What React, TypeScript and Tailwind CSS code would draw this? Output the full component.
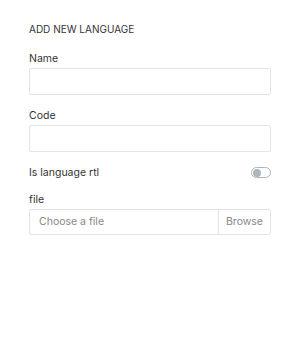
import { useState } from 'react'

export default function App() {
  const [rtl, setRtl] = useState(false)

  return (
    <div className="w-[300px] h-[338px] bg-white px-[29px] pt-[23px] text-[#333] font-['Inter','Liberation_Sans',sans-serif]">
      <h5 className="text-[10px] leading-[13px] uppercase text-[#333]">Add new language</h5>

      <div className="mt-[16px]">
        <label className="block text-[10.5px] leading-[13px]">Name</label>
        <input className="mt-[3px] block w-full h-[27px] border border-[#e3e3e3] rounded-[2px] outline-none px-2 text-[11px]" />
      </div>

      <div className="mt-[14px]">
        <label className="block text-[10.5px] leading-[13px]">Code</label>
        <input className="mt-[3px] block w-full h-[27px] border border-[#e3e3e3] rounded-[2px] outline-none px-2 text-[11px]" />
      </div>

      <div className="mt-[14px] flex items-center justify-between">
        <span className="text-[10.5px] leading-[13px]">Is language rtl</span>
        <button
          onClick={() => setRtl(!rtl)}
          className="w-[20px] h-[11px] rounded-full border border-[#adb5bd] bg-white flex items-center px-[1px]"
        >
          <span className="w-[8px] h-[8px] rounded-full bg-[#adb5bd]" />
        </button>
      </div>

      <div className="mt-[14px]">
        <label className="block text-[10.5px] leading-[13px]">file</label>
        <div className="mt-[3px] flex h-[26px] border border-[#e3e3e3] rounded-[2px] text-[10.5px] text-[#888]">
          <span className="flex-1 flex items-center pl-[9px]">Choose a file</span>
          <span className="flex items-center px-[7px] border-l border-[#e3e3e3]">Browse</span>
        </div>
      </div>
    </div>
  )
}
